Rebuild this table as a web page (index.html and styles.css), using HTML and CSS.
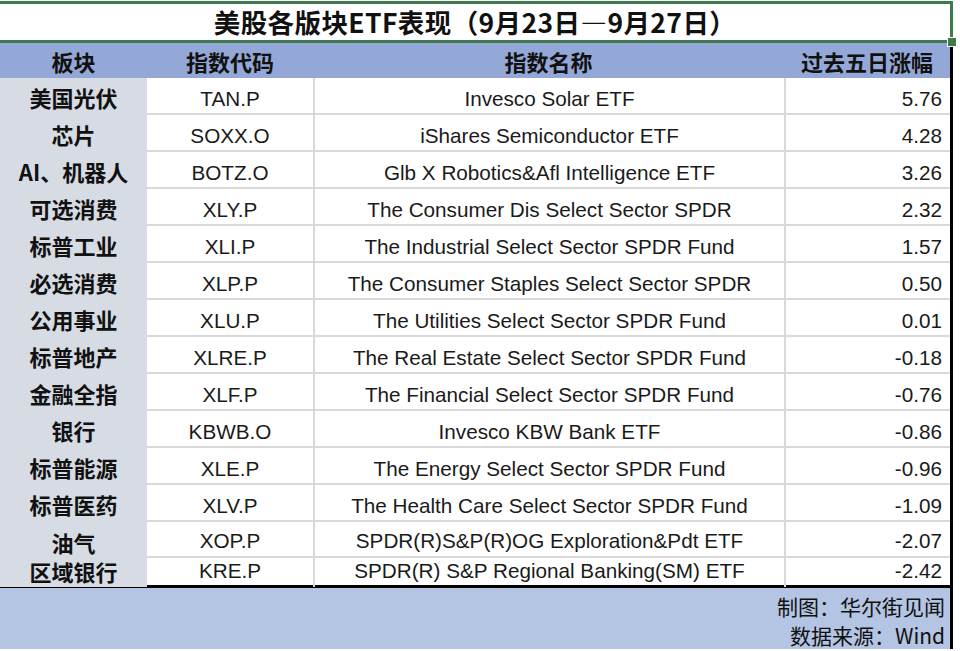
FILE: index.html
```html
<!DOCTYPE html>
<html lang="zh">
<head>
<meta charset="utf-8">
<link rel="stylesheet" href="styles.css">
</head>
<body>
<div class="sheet">
  <div class="title">
    <span class="title-text">美股各版块ETF表现（9月23日—9月27日）</span>
    <span class="handle"></span>
  </div>
  <div class="table">
    <div class="row head">
      <div class="c c1">板块</div>
      <div class="c c2">指数代码</div>
      <div class="c c3">指数名称</div>
      <div class="c c4">过去五日涨幅</div>
    </div>
    <div class="row"><div class="c c1">美国光伏</div><div class="c c2">TAN.P</div><div class="c c3">Invesco Solar ETF</div><div class="c c4">5.76</div></div>
    <div class="row"><div class="c c1">芯片</div><div class="c c2">SOXX.O</div><div class="c c3">iShares Semiconductor ETF</div><div class="c c4">4.28</div></div>
    <div class="row"><div class="c c1">AI、机器人</div><div class="c c2">BOTZ.O</div><div class="c c3">Glb X Robotics&amp;Afl Intelligence ETF</div><div class="c c4">3.26</div></div>
    <div class="row"><div class="c c1">可选消费</div><div class="c c2">XLY.P</div><div class="c c3">The Consumer Dis Select Sector SPDR</div><div class="c c4">2.32</div></div>
    <div class="row"><div class="c c1">标普工业</div><div class="c c2">XLI.P</div><div class="c c3">The Industrial Select Sector SPDR Fund</div><div class="c c4">1.57</div></div>
    <div class="row"><div class="c c1">必选消费</div><div class="c c2">XLP.P</div><div class="c c3">The Consumer Staples Select Sector SPDR</div><div class="c c4">0.50</div></div>
    <div class="row"><div class="c c1">公用事业</div><div class="c c2">XLU.P</div><div class="c c3">The Utilities Select Sector SPDR Fund</div><div class="c c4">0.01</div></div>
    <div class="row"><div class="c c1">标普地产</div><div class="c c2">XLRE.P</div><div class="c c3">The Real Estate Select Sector SPDR Fund</div><div class="c c4">-0.18</div></div>
    <div class="row"><div class="c c1">金融全指</div><div class="c c2">XLF.P</div><div class="c c3">The Financial Select Sector SPDR Fund</div><div class="c c4">-0.76</div></div>
    <div class="row"><div class="c c1">银行</div><div class="c c2">KBWB.O</div><div class="c c3">Invesco KBW Bank ETF</div><div class="c c4">-0.86</div></div>
    <div class="row"><div class="c c1">标普能源</div><div class="c c2">XLE.P</div><div class="c c3">The Energy Select Sector SPDR Fund</div><div class="c c4">-0.96</div></div>
    <div class="row"><div class="c c1">标普医药</div><div class="c c2">XLV.P</div><div class="c c3">The Health Care Select Sector SPDR Fund</div><div class="c c4">-1.09</div></div>
    <div class="row short"><div class="c c1">油气</div><div class="c c2">XOP.P</div><div class="c c3">SPDR(R)S&amp;P(R)OG Exploration&amp;Pdt ETF</div><div class="c c4">-2.07</div></div>
    <div class="row last"><div class="c c1">区域银行</div><div class="c c2">KRE.P</div><div class="c c3">SPDR(R) S&amp;P Regional Banking(SM) ETF</div><div class="c c4">-2.42</div></div>
    <div class="footer">
      <div class="note">制图：华尔街见闻</div>
      <div class="note">数据来源：Wind</div>
    </div>
  </div>
</div>
</body>
</html>
```

FILE: styles.css
```css
* { box-sizing: border-box; }
html, body { margin: 0; padding: 0; background: #ffffff; }
body {
  width: 960px;
  height: 651px;
  overflow: hidden;
  font-family: "Liberation Sans", "Noto Sans CJK SC", sans-serif;
  color: #1a1a1a;
}
.sheet {
  width: 953px;
  padding-top: 1px;
}
.title {
  position: relative;
  height: 42px;
  border-top: 3px solid #3e7a4e;
  border-bottom: 3px solid #3e7a4e;
  border-right: 3px solid #3e7a4e;
  display: flex;
  align-items: center;
  justify-content: center;
  padding-right: 0;
  padding-top: 1px;
}
.title-text {
  font-family: "Noto Sans CJK SC", sans-serif;
  font-weight: 700;
  font-size: 26.5px;
  letter-spacing: 0.4px;
  line-height: 1;
  color: #111;
}
.handle {
  position: absolute;
  right: -7px;
  bottom: -7px;
  width: 10px;
  height: 10px;
  background: #3e7a4e;
  border: 1px solid #fff;
}
.table {
  width: 953px;
  border-right: 3px solid #000;
}
.row {
  display: grid;
  grid-template-columns: 147px 166px 471px 166px;
  height: 37px;
}
.row.head { height: 35px; background: #94a8d8; }
.row.short { height: 33px; }
.row.last { height: 30px; }
.c {
  display: flex;
  align-items: center;
  justify-content: center;
  font-size: 20.7px;
  white-space: nowrap;
  padding-top: 6px;
}
.row.short .c { padding-top: 4px; }
.row.last .c { padding-top: 0; }
.row:not(.head) .c2,
.row:not(.head) .c3,
.row:not(.head) .c4 {
  border-bottom: 2px solid #d9d9d9;
}
.row.last .c { border-bottom: none !important; }
.row:not(.head) .c3,
.row:not(.head) .c4 { border-left: 2px solid #d9d9d9; }
.c1 {
  background: #d6dbe4;
  font-family: "Noto Sans CJK SC", sans-serif;
  font-weight: 700;
  font-size: 22px;
  color: #111;
}
.row .c1 { padding-top: 1px; }
.row.last .c1 { padding-top: 0; }
.row.head .c {
  font-family: "Noto Sans CJK SC", sans-serif;
  font-weight: 700;
  font-size: 22px;
  background: transparent;
  color: #111;
  padding-top: 0;
}
.row:not(.head) .c4 {
  justify-content: flex-end;
  padding-right: 8px;
}
.footer {
  height: 64px;
  border-top: 3px solid #000;
  background: #b4c4e3;
  padding: 4px 5px 0 0;
  text-align: right;
  font-family: "Noto Sans CJK SC", sans-serif;
  font-size: 21px;
  line-height: 29px;
  color: #111;
}
```
